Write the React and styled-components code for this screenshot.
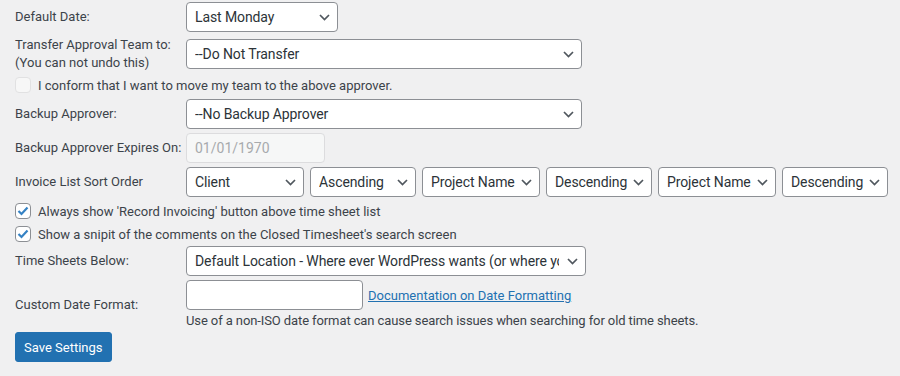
import React from "react";
import styled, { createGlobalStyle } from "styled-components";

const GlobalStyle = createGlobalStyle`
  body {
    margin: 0;
    background: #f0f0f1;
    font-family: "Segoe UI", Roboto, "Noto Sans", sans-serif;
    color: #3c434a;
  }
`;

const Page = styled.form`
  display: flex;
  flex-direction: column;
  padding: 2px 12px 14px 15px;
`;

const Row = styled.div`
  display: flex;
  align-items: center;
  margin-top: ${({ $mt }) => $mt || 0}px;
  min-height: ${({ $h }) => $h || 30}px;
`;

const Label = styled.div`
  width: 171px;
  flex-shrink: 0;
  font-size: 13px;
  line-height: 18px;
  color: #3c434a;
`;

const Controls = styled.div`
  display: flex;
  align-items: center;
  gap: ${({ $gap }) => $gap || 0}px;
`;

const Stack = styled.div`
  display: flex;
  flex-direction: column;
`;

const SelectWrap = styled.div`
  position: relative;
  width: ${({ $w }) => $w}px;
  height: 30px;
  flex-shrink: 0;
`;

const SelectBox = styled.select`
  appearance: none;
  width: 100%;
  height: 30px;
  box-sizing: border-box;
  margin: 0;
  padding: 0 ${({ $pr }) => $pr || 22}px 0 8px;
  background: #fff;
  border: 1px solid #8c8f94;
  border-radius: 4px;
  font-family: inherit;
  font-size: 14px;
  letter-spacing: -0.1px;
  color: #2c3338;
  outline: none;
`;

const Chevron = styled.svg`
  position: absolute;
  right: 8px;
  top: 12px;
  width: 11px;
  height: 7px;
  pointer-events: none;
`;

const TextInput = styled.input`
  width: ${({ $w }) => $w}px;
  height: 30px;
  box-sizing: border-box;
  margin: 0;
  padding: 0 8px;
  border: 1px solid ${({ disabled }) => (disabled ? "#dcdcde" : "#8c8f94")};
  border-radius: 4px;
  background: ${({ disabled }) => (disabled ? "#f6f7f7" : "#fff")};
  color: ${({ disabled }) => (disabled ? "#a7aaad" : "#2c3338")};
  font-family: inherit;
  font-size: 14px;
  outline: none;
`;

const CheckRow = styled.label`
  display: flex;
  align-items: center;
  gap: 7px;
  height: 20px;
  margin-top: ${({ $mt }) => $mt || 0}px;
  font-size: 13px;
  color: #3c434a;
`;

const Box = styled.span`
  width: 16px;
  height: 16px;
  box-sizing: border-box;
  border-radius: 4px;
  border: 1px solid ${({ $disabled }) => ($disabled ? "#e1e1e2" : "#8c8f94")};
  background: ${({ $disabled }) => ($disabled ? "#f7f7f7" : "#fff")};
  display: flex;
  align-items: center;
  justify-content: center;
  flex-shrink: 0;
`;

const DocLink = styled.a`
  font-size: 13px;
  color: #2271b1;
  text-decoration: underline;
`;

const Help = styled.div`
  font-size: 13px;
  line-height: 18px;
  margin-top: 2px;
  letter-spacing: -0.1px;
  color: #3c434a;
`;

const SaveButton = styled.button`
  align-self: flex-start;
  margin-top: 2px;
  height: 30px;
  padding: 0 8px;
  background: #2271b1;
  border: 1px solid #2271b1;
  border-radius: 3px;
  color: #fff;
  font-family: inherit;
  font-size: 13px;
  cursor: pointer;
`;

const Select = ({ w, value, pr }) => (
  <SelectWrap $w={w}>
    <SelectBox defaultValue={value} $pr={pr}>
      <option>{value}</option>
    </SelectBox>
    <Chevron viewBox="0 0 11 7">
      <polyline points="1,1 5.5,5.5 10,1" fill="none" stroke="#50575e" strokeWidth="1.7" />
    </Chevron>
  </SelectWrap>
);

const Check = ({ checked, disabled, children, mt }) => (
  <CheckRow $mt={mt}>
    <Box $disabled={disabled}>
      {checked && (
        <svg width="12" height="10" viewBox="0 0 12 10">
          <polyline points="1.5,5 4.5,8 10.5,1.5" fill="none" stroke="#3582c4" strokeWidth="2.2" />
        </svg>
      )}
    </Box>
    {children}
  </CheckRow>
);

const sortSelects = [
  { w: 118, v: "Client" },
  { w: 106, v: "Ascending" },
  { w: 118, v: "Project Name" },
  { w: 106, v: "Descending" },
  { w: 118, v: "Project Name" },
  { w: 106, v: "Descending" },
];

const App = () => (
  <>
    <GlobalStyle />
    <Page onSubmit={(e) => e.preventDefault()}>
      <Row>
        <Label>Default Date:</Label>
        <Select w={152} value="Last Monday" />
      </Row>
      <Row $mt={4} $h={36}>
        <Label>
          Transfer Approval Team to:
          <br />
          (You can not undo this)
        </Label>
        <Select w={396} value="--Do Not Transfer" />
      </Row>
      <Check disabled mt={3}>
        I conform that I want to move my team to the above approver.
      </Check>
      <Row $mt={4}>
        <Label>Backup Approver:</Label>
        <Select w={396} value="--No Backup Approver" />
      </Row>
      <Row $mt={4}>
        <Label>Backup Approver Expires On:</Label>
        <TextInput $w={139} disabled defaultValue="01/01/1970" />
      </Row>
      <Row $mt={4}>
        <Label>Invoice List Sort Order</Label>
        <Controls $gap={6}>
          {sortSelects.map((s, i) => (
            <Select key={i} w={s.w} value={s.v} />
          ))}
        </Controls>
      </Row>
      <Check checked mt={4}>
        Always show 'Record Invoicing' button above time sheet list
      </Check>
      <Check checked mt={3}>
        Show a snipit of the comments on the Closed Timesheet's search screen
      </Check>
      <Row $mt={2}>
        <Label>Time Sheets Below:</Label>
        <Select w={400} pr={26} value="Default Location - Where ever WordPress wants (or where you put it)" />
      </Row>
      <Row $mt={4}>
        <Label>Custom Date Format:</Label>
        <Stack>
          <Controls $gap={5}>
            <TextInput $w={177} />
            <DocLink href="#">Documentation on Date Formatting</DocLink>
          </Controls>
          <Help>Use of a non-ISO date format can cause search issues when searching for old time sheets.</Help>
        </Stack>
      </Row>
      <SaveButton type="submit">Save Settings</SaveButton>
    </Page>
  </>
);

export default App;
